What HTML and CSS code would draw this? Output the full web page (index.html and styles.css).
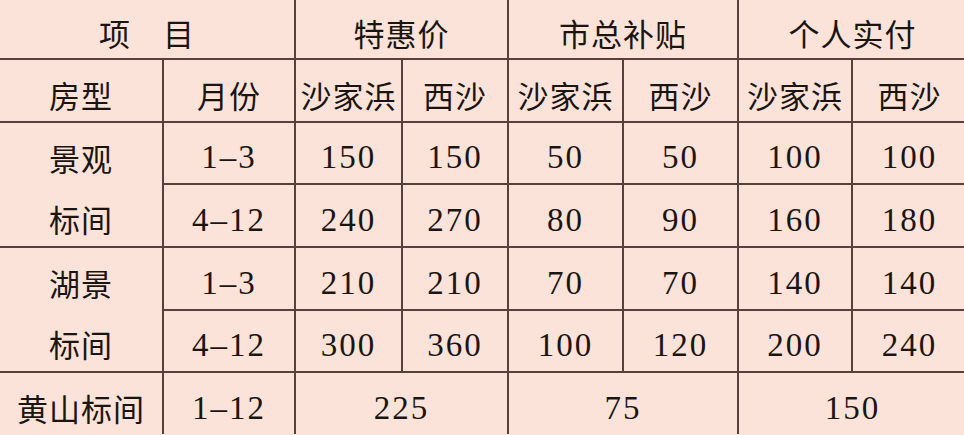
FILE: index.html
```html
<!DOCTYPE html>
<html lang="zh-CN">
<head>
<meta charset="utf-8">
<link rel="stylesheet" href="styles.css">
</head>
<body>
<table class="price">
  <colgroup>
    <col class="c1"><col class="c2"><col class="c3"><col class="c4"><col class="c5"><col class="c6"><col class="c7"><col class="c8">
  </colgroup>
  <tr class="r1">
    <td colspan="2" class="cn">项　目</td>
    <td colspan="2" class="cn">特惠价</td>
    <td colspan="2" class="cn">市总补贴</td>
    <td colspan="2" class="cn">个人实付</td>
  </tr>
  <tr class="r2">
    <td class="cn">房型</td>
    <td class="cn">月份</td>
    <td class="cn">沙家浜</td>
    <td class="cn">西沙</td>
    <td class="cn">沙家浜</td>
    <td class="cn">西沙</td>
    <td class="cn">沙家浜</td>
    <td class="cn">西沙</td>
  </tr>
  <tr class="r3">
    <td rowspan="2" class="cn two"><div class="line">景观</div><div class="line">标间</div></td>
    <td class="num">1–3</td>
    <td class="num">150</td>
    <td class="num">150</td>
    <td class="num">50</td>
    <td class="num">50</td>
    <td class="num">100</td>
    <td class="num">100</td>
  </tr>
  <tr class="r4">
    <td class="num">4–12</td>
    <td class="num">240</td>
    <td class="num">270</td>
    <td class="num">80</td>
    <td class="num">90</td>
    <td class="num">160</td>
    <td class="num">180</td>
  </tr>
  <tr class="r5">
    <td rowspan="2" class="cn two"><div class="line">湖景</div><div class="line">标间</div></td>
    <td class="num">1–3</td>
    <td class="num">210</td>
    <td class="num">210</td>
    <td class="num">70</td>
    <td class="num">70</td>
    <td class="num">140</td>
    <td class="num">140</td>
  </tr>
  <tr class="r6">
    <td class="num">4–12</td>
    <td class="num">300</td>
    <td class="num">360</td>
    <td class="num">100</td>
    <td class="num">120</td>
    <td class="num">200</td>
    <td class="num">240</td>
  </tr>
  <tr class="r7">
    <td class="cn">黄山标间</td>
    <td class="num">1–12</td>
    <td colspan="2" class="num">225</td>
    <td colspan="2" class="num">75</td>
    <td colspan="2" class="num">150</td>
  </tr>
</table>
</body>
</html>
```

FILE: styles.css
```css
html, body {
  margin: 0;
  padding: 0;
  background: #fbe3d9;
}
body {
  width: 964px;
  height: 435px;
  overflow: hidden;
}
.price {
  width: 966px;
  table-layout: fixed;
  border-collapse: collapse;
  border-style: hidden;
  color: #1b1512;
}
.c1 { width: 163px; }
.c2 { width: 132px; }
.c3 { width: 107px; }
.c4 { width: 106px; }
.c5 { width: 115px; }
.c6 { width: 115px; }
.c7 { width: 114px; }
.c8 { width: 114px; }
.price td {
  border: 2px solid #5a403a;
  padding: 8px 0 0 0;
  text-align: center;
  vertical-align: middle;
  overflow: hidden;
  white-space: nowrap;
}
.r1 td { height: 50px; }
.r2 td { height: 53px; }
.r3 td { height: 52px; }
.r4 td { height: 53px; }
.r5 td { height: 53px; }
.r6 td { height: 52px; }
.r7 td { height: 53px; }
.cn {
  font-family: "Noto Sans CJK SC", "Noto Sans CJK JP", sans-serif;
  font-size: 31px;
  line-height: 40px;
  letter-spacing: 1px;
}
.num {
  font-family: "Liberation Serif", "Times New Roman", serif;
  font-size: 33px;
  line-height: 40px;
  letter-spacing: 2px;
}
.price td.two {
  padding: 0;
}
.two .line {
  height: 60px;
  line-height: 52px;
  padding-top: 8px;
  box-sizing: border-box;
}
.two .line + .line {
  height: 61px;
  padding-top: 9px;
}
```
